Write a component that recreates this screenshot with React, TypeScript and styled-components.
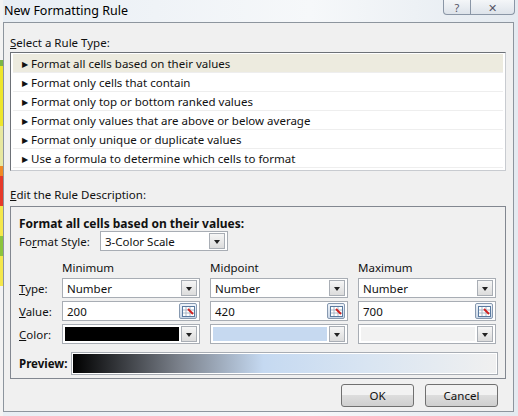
import React from "react";
import styled, { createGlobalStyle } from "styled-components";

const G = createGlobalStyle`
  html,body{margin:0;padding:0;background:#f0f0f0;}
  body{font-family:"Noto Sans","Open Sans",sans-serif;font-size:11.5px;color:#111;}
  *{box-sizing:border-box;}
`;
const Win = styled.div`width:518px;height:416px;display:flex;background:linear-gradient(90deg,#e8eef4,#f6f8fa 60%,#e4eaf0);`;
const Strip = styled.div`width:3px;display:flex;flex-direction:column;`;
const Seg = styled.div<{c:string;h:number}>`height:${p=>p.h}px;background:${p=>p.c};`;
const Main = styled.div`flex:1;display:flex;flex-direction:column;`;
const TitleBar = styled.div`height:22px;display:flex;align-items:flex-start;justify-content:space-between;padding-left:1px;`;
const Title = styled.div`font-size:12.5px;padding-top:2px;color:#000;`;
const Ctrls = styled.div`display:flex;margin-right:3px;`;
const Ctrl = styled.div<{w:number}>`width:${p=>p.w}px;height:15px;border:1px solid #8a96a6;border-top:none;background:linear-gradient(#f4f6f8,#dde3ea);display:flex;align-items:center;justify-content:center;font-size:11px;color:#556;&:first-child{border-radius:0 0 0 4px;}&:last-child{border-left:none;border-radius:0 0 4px 0;}`;
const Body = styled.div`flex:1;margin:0 4px 4px 0;border:1px solid #8d959e;background:#f0f0f0;padding:12px 7px 0 6px;display:flex;flex-direction:column;`;
const Label = styled.div`height:17px;`;
const U = styled.span`text-decoration:underline;`;
const ListBox = styled.div`border:1px solid #828790;border-color:#6d7177 #c8cbd0 #c8cbd0 #6d7177;background:#fff;padding:1px 2px;height:119px;margin-bottom:16px;`;
const Row = styled.div<{sel?:boolean}>`height:19px;display:flex;align-items:center;padding-left:9px;gap:3px;border-bottom:1px solid #eee;background:${p=>p.sel?"#edebdf":"#fff"};`;
const Tri = styled.span`font-size:8px;`;
const DescBox = styled.div`border:1px solid #828790;background:#f0f0f0;height:173px;padding:8px 7px 0 8px;display:flex;flex-direction:column;margin-top:2px;`;
const Bold = styled.div`font-weight:bold;font-size:12px;height:15px;`;
const FSRow = styled.div`display:flex;align-items:center;gap:10px;height:22px;`;
const Grid = styled.div`display:grid;grid-template-columns:33px 138px 138px 138px;column-gap:10px;row-gap:3px;margin-top:9px;align-items:center;`;
const Head = styled.div`height:14px;line-height:14px;`;
const Box = styled.div<{w?:number}>`height:20px;${p=>p.w?`width:${p.w}px;`:""}border:1px solid #a8adb4;background:#fff;display:flex;align-items:center;padding:2px;gap:2px;`;
const Txt = styled.div`flex:1;padding-left:2px;white-space:nowrap;`;
const Swatch = styled.div<{c:string}>`flex:1;height:100%;background:${p=>p.c};`;
const DD = styled.div`width:16px;height:16px;border:1px solid #a9aeb5;background:linear-gradient(#f6f6f6,#dcdcdc);display:flex;align-items:center;justify-content:center;&::after{content:"";border:3.5px solid transparent;border-top:4px solid #222;margin-top:4px;}`;
const RefBtn = styled.div`width:18px;height:16px;border:1px solid #8799b0;border-radius:2px;background:linear-gradient(#eef3f9,#c9d6e6);display:flex;align-items:center;justify-content:center;`;
const PrevRow = styled.div`display:flex;align-items:center;gap:4px;margin-top:8px;`;
const PrevBar = styled.div`flex:1;height:23px;border:1px solid #a8adb4;padding:1px;background:#fff;`;
const Grad = styled.div`height:100%;background:linear-gradient(90deg,#000 0%,#7a808a 25%,#c5d9f1 45%,#d9e5f2 70%,#f0f0f0 100%);`;
const Btns = styled.div`display:flex;justify-content:flex-end;gap:11px;padding:5px 8px 0 0;`;
const Btn = styled.div`width:73px;height:23px;border:1px solid #707070;border-radius:3px;background:linear-gradient(#f2f2f2 50%,#dddddd 50%,#cfcfcf);display:flex;align-items:center;justify-content:center;`;

const Ref = () => (<RefBtn><svg width="13" height="11" viewBox="0 0 13 11"><rect x="0.5" y="0.5" width="12" height="10" fill="#fff" stroke="#5a7aa0"/><path d="M1 4h11M1 7h11M4 1v9M8 1v9" stroke="#9ab" strokeWidth="0.8"/><path d="M6 3l5 5" stroke="#d02020" strokeWidth="2"/></svg></RefBtn>);

const rows = ["Format all cells based on their values","Format only cells that contain","Format only top or bottom ranked values","Format only values that are above or below average","Format only unique or duplicate values","Use a formula to determine which cells to format"];
const cols = [["Minimum","200","#000"],["Midpoint","420","#c6d9f0"],["Maximum","700","#f2f2f2"]];

export default function App(){
  return (<Win><G/>
    <Strip><Seg c="#f3f3f3" h={60}/><Seg c="#7ab648" h={6}/><Seg c="#eee62a" h={60}/><Seg c="#e8e8a0" h={40}/><Seg c="#f08a24" h={10}/><Seg c="#e63a2a" h={30}/><Seg c="#f5e84a" h={30}/><Seg c="#8cc43c" h={20}/><Seg c="#f5e84a" h={30}/><Seg c="#f3f3f3" h={130}/></Strip>
    <Main>
      <TitleBar><Title>New Formatting Rule</Title><Ctrls><Ctrl w={28}>?</Ctrl><Ctrl w={44}>✕</Ctrl></Ctrls></TitleBar>
      <Body>
        <Label><U>S</U>elect a Rule Type:</Label>
        <ListBox>{rows.map((r,i)=><Row key={r} sel={i===0}><Tri>▶</Tri>{r}</Row>)}</ListBox>
        <Label><U>E</U>dit the Rule Description:</Label>
        <DescBox>
          <Bold>Format all cells based on their values:</Bold>
          <FSRow><span>Fo<U>r</U>mat Style:</span><Box w={128}><Txt>3-Color Scale</Txt><DD/></Box></FSRow>
          <Grid>
            <div/>{cols.map(c=><Head key={c[0]}>{c[0]}</Head>)}
            <div><U>T</U>ype:</div>{cols.map(c=><Box key={c[0]}><Txt>Number</Txt><DD/></Box>)}
            <div><U>V</U>alue:</div>{cols.map(c=><Box key={c[0]}><Txt>{c[1]}</Txt><Ref/></Box>)}
            <div><U>C</U>olor:</div>{cols.map(c=><Box key={c[0]}><Swatch c={c[2]}/><DD/></Box>)}
          </Grid>
          <PrevRow><b>Preview:</b><PrevBar><Grad/></PrevBar></PrevRow>
        </DescBox>
        <Btns><Btn>OK</Btn><Btn>Cancel</Btn></Btns>
      </Body>
    </Main>
  </Win>);
}
